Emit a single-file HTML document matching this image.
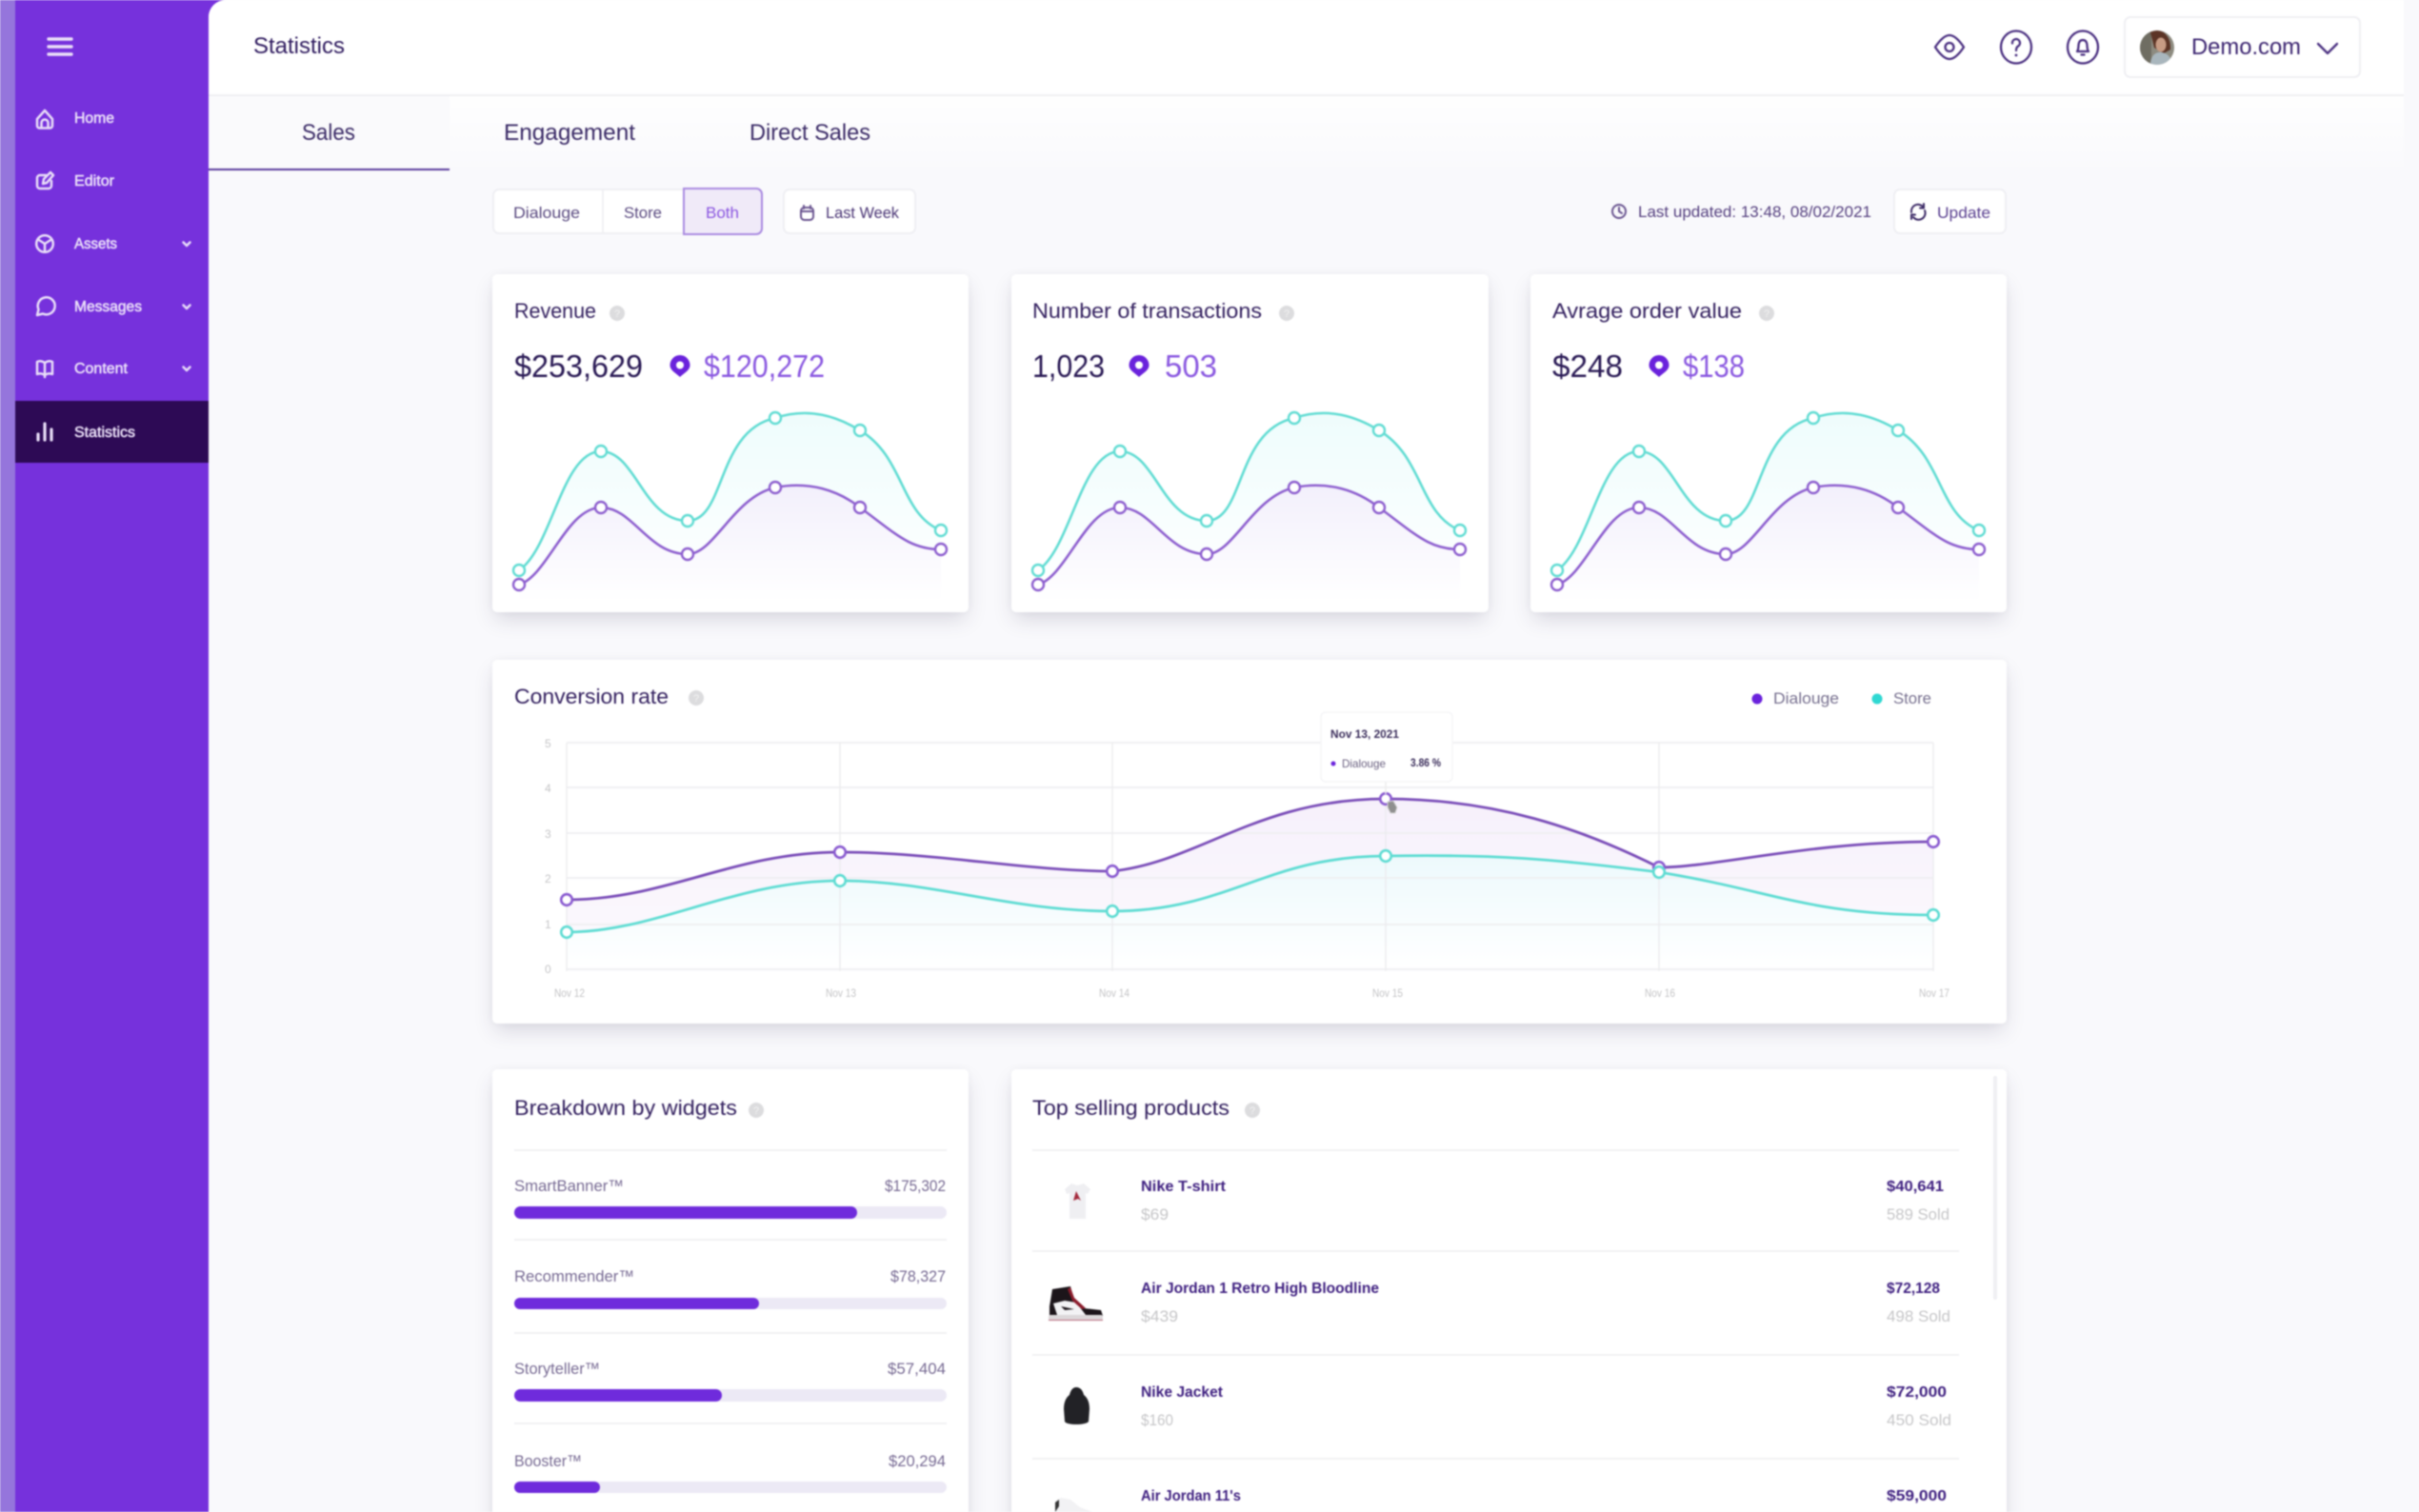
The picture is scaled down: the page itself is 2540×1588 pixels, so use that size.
<!DOCTYPE html>
<html lang="en">
<head>
<meta charset="utf-8">
<title>Statistics</title>
<style>
html,body{margin:0;padding:0;background:#f8f8fb;}
#root{position:relative;width:2540px;height:1588px;overflow:hidden;background:#f8f8fb;filter:blur(.8px);font-family:"Liberation Sans",sans-serif;}
.strip{position:absolute;left:0;top:0;width:16px;height:1588px;background:#9575dc;}
.side{position:absolute;left:16px;top:0;width:232px;height:1588px;background:#7631dc;}
.active{position:absolute;left:16px;top:421px;width:203px;height:65px;background:#2d0a55;}
.main{position:absolute;left:219px;top:0;width:2321px;height:1588px;background:#f9f9fc;border-top-left-radius:18px;overflow:hidden;}
.top{position:absolute;left:0;top:0;width:2305px;height:99px;background:#fff;border-bottom:2px solid #efeff2;}
.band{position:absolute;left:253px;top:101px;width:2052px;height:78px;background:linear-gradient(#fefefe,#f9f9fc);}
.salesbg{position:absolute;left:0;top:101px;width:253px;height:76px;background:#fafafc;}
.under{position:absolute;left:0;top:177px;width:253px;height:2px;background:#5a3a9c;}
.card{position:absolute;background:#fff;border-radius:5px;box-shadow:0 10px 22px -3px rgba(50,40,80,.17),0 0 8px rgba(50,40,80,.04);}
.btn{position:absolute;background:#fff;border:2px solid #efeff3;border-radius:7px;box-sizing:border-box;}
.both{position:absolute;background:#f0eaf8;border:2px solid #a98ae0;border-radius:0 7px 7px 0;box-sizing:border-box;}
svg{position:absolute;left:0;top:0;}
text{font-family:"Liberation Sans",sans-serif;}
</style>
</head>
<body>
<div id="root">
  <div class="strip"></div>
  <div class="side"></div>
  <div class="active"></div>
  <div class="main">
    <div class="top"></div>
    <div class="band"></div>
    <div class="salesbg"></div>
    <div class="under"></div>
  </div>
  <div class="btn" style="left:2230px;top:17px;width:249px;height:65px;"></div>
  <div class="btn" style="left:517px;top:198px;width:283px;height:48px;"></div>
  <div style="position:absolute;left:632px;top:200px;width:2px;height:44px;background:#f1f1f4;"></div>
  <div class="both" style="left:717px;top:197px;width:84px;height:50px;"></div>
  <div class="btn" style="left:822px;top:198px;width:140px;height:48px;"></div>
  <div class="btn" style="left:1988px;top:198px;width:119px;height:48px;"></div>

  <div class="card" style="left:517px;top:288px;width:500px;height:355px;"></div>
  <div class="card" style="left:1062px;top:288px;width:501px;height:355px;"></div>
  <div class="card" style="left:1607px;top:288px;width:500px;height:355px;"></div>
  <div class="card" style="left:517px;top:693px;width:1590px;height:382px;"></div>
  <div class="card" style="left:517px;top:1123px;width:500px;height:520px;"></div>
  <div class="card" style="left:1062px;top:1123px;width:1045px;height:520px;"></div>

  <svg width="2540" height="1588" viewBox="0 0 2540 1588" xmlns="http://www.w3.org/2000/svg">
    <defs>
      <linearGradient id="gt" gradientUnits="userSpaceOnUse" x1="0" y1="430" x2="0" y2="635">
        <stop offset="0" stop-color="#eefcfc"/><stop offset="1" stop-color="#ffffff"/>
      </linearGradient>
      <linearGradient id="gp" gradientUnits="userSpaceOnUse" x1="0" y1="505" x2="0" y2="635">
        <stop offset="0" stop-color="#f2effb"/><stop offset="1" stop-color="#ffffff"/>
      </linearGradient>
      <linearGradient id="cp" gradientUnits="userSpaceOnUse" x1="0" y1="840" x2="0" y2="1018">
        <stop offset="0" stop-color="#f6f0fb"/><stop offset="1" stop-color="#fcfafd"/>
      </linearGradient>
      <linearGradient id="ct" gradientUnits="userSpaceOnUse" x1="0" y1="900" x2="0" y2="1018">
        <stop offset="0" stop-color="#edf9fc"/><stop offset="1" stop-color="#ffffff"/>
      </linearGradient>
      <g id="spark">
        <path d="M545 599 C580 575 590 474 631 474 C668 474 675 547 722 547 C762 547 752 452 814 439 C850 427 880 438 903 452 C950 480 945 540 988 557 L988 632 L545 632 Z" fill="url(#gt)"/>
        <path d="M545 614 C575 605 595 533 631 533 C665 533 680 582 722 582 C750 582 770 522 814 512 C850 505 880 515 903 533 C940 560 955 577 988 577 L988 632 L545 632 Z" fill="url(#gp)"/>
        <path d="M545 599 C580 575 590 474 631 474 C668 474 675 547 722 547 C762 547 752 452 814 439 C850 427 880 438 903 452 C950 480 945 540 988 557" fill="none" stroke="#62dcd3" stroke-width="2.600"/>
        <path d="M545 614 C575 605 595 533 631 533 C665 533 680 582 722 582 C750 582 770 522 814 512 C850 505 880 515 903 533 C940 560 955 577 988 577" fill="none" stroke="#8e60cf" stroke-width="2.600"/>
        <g fill="#fff" stroke="#62dcd3" stroke-width="2.400">
          <circle cx="545" cy="599" r="6"/><circle cx="631" cy="474" r="6"/><circle cx="722" cy="547" r="6"/><circle cx="814" cy="439" r="6"/><circle cx="903" cy="452" r="6"/><circle cx="988" cy="557" r="6"/>
        </g>
        <g fill="#fff" stroke="#8e60cf" stroke-width="2.400">
          <circle cx="545" cy="614" r="6"/><circle cx="631" cy="533" r="6"/><circle cx="722" cy="582" r="6"/><circle cx="814" cy="512" r="6"/><circle cx="903" cy="533" r="6"/><circle cx="988" cy="577" r="6"/>
        </g>
      </g>
      <g id="pin">
        <path d="M0 -11 A10.500 10.500 0 0 1 10.500 -.5 C10.500 5 4 8 0 12 C-4 8 -10.500 5 -10.500 -.5 A10.500 10.500 0 0 1 0 -11 Z" fill="#6a22dc"/>
        <circle cx="0" cy="-.5" r="4" fill="#fff"/>
      </g>
      <g id="info">
        <circle r="8" fill="#dcdcde"/>
        <text x="0" y="4" text-anchor="middle" font-size="11" fill="#f2f2f2">?</text>
      </g>
    </defs>

    <!-- sidebar -->
    <g stroke="#eadff8" stroke-width="3.400" stroke-linecap="round">
      <path d="M51 41 H75 M51 49 H75 M51 57 H75"/>
    </g>
    <g fill="none" stroke="#e9def8" stroke-width="2.500" stroke-linecap="round" stroke-linejoin="round">
      <path d="M39 125 L47 116 L55 125 V132 A2.500 2.500 0 0 1 52.500 134.500 H41.500 A2.500 2.500 0 0 1 39 132 Z"/>
      <path d="M43.500 134 V129 A3.500 3.500 0 0 1 50.500 129 V134"/>
      <path d="M48 184 H42 A3 3 0 0 0 39 187 V195 A3 3 0 0 0 42 198 H51 A3 3 0 0 0 54 195 V190"/>
      <path d="M45 193 L46 188 L53 181 L56 184 L49 192 Z"/>
      <circle cx="47" cy="256" r="8.800"/>
      <path d="M47 256 L40 251.500 M47 256 L54 251.500 M47 256 V264"/>
      <path d="M39 331 L40.500 325 A9 9 0 1 1 45 329.500 Z"/>
      <path d="M47 381 C44 379 41 379 39 380 V393 C42 392 44 392 47 394 C50 392 52 392 55 393 V380 C53 379 50 379 47 381 V396"/>
      <path d="M192.500 254.500 L196 258 L199.500 254.500 M192.500 320.500 L196 324 L199.500 320.500 M192.500 385.500 L196 389 L199.500 385.500"/>
    </g>
    <g stroke="#e9def8" stroke-width="3.200" stroke-linecap="round">
      <path d="M40 456 V462 M47 445 V462 M54 451 V462"/>
    </g>
    <g fill="#ece2f9" font-size="16" stroke="#ece2f9" stroke-width=".5">
      <text x="78" y="129" textLength="42" lengthAdjust="spacingAndGlyphs">Home</text>
      <text x="78" y="195" textLength="42" lengthAdjust="spacingAndGlyphs">Editor</text>
      <text x="78" y="261" textLength="45" lengthAdjust="spacingAndGlyphs">Assets</text>
      <text x="78" y="327" textLength="71" lengthAdjust="spacingAndGlyphs">Messages</text>
      <text x="78" y="392" textLength="56" lengthAdjust="spacingAndGlyphs">Content</text>
      <text x="78" y="459" textLength="64" lengthAdjust="spacingAndGlyphs">Statistics</text>
    </g>

    <!-- top bar -->
    <g fill="#2e1a5e" font-size="24">
      <text x="266" y="56" textLength="96" lengthAdjust="spacingAndGlyphs">Statistics</text>
      <text x="317" y="147" textLength="56" lengthAdjust="spacingAndGlyphs" fill="#3a2a66">Sales</text>
      <text x="529" y="147" textLength="138" lengthAdjust="spacingAndGlyphs" fill="#3a2a66">Engagement</text>
      <text x="787" y="147" textLength="127" lengthAdjust="spacingAndGlyphs" fill="#3a2a66">Direct Sales</text>
      <text x="2301" y="57" textLength="115" lengthAdjust="spacingAndGlyphs" fill="#3b2470">Demo.com</text>
    </g>
    <g fill="none" stroke="#4a2f80" stroke-width="2.300" stroke-linecap="round" stroke-linejoin="round">
      <path d="M2032 49.500 C2037 42 2042 37 2047 37 C2052 37 2057 42 2062 49.500 C2057 57 2052 62 2047 62 C2042 62 2037 57 2032 49.500 Z"/>
      <circle cx="2047" cy="49.500" r="4.500"/>
      <ellipse cx="2117" cy="49.500" rx="16" ry="17"/>
      <path d="M2113 45.500 A4 4 0 1 1 2119 48.500 C2117.500 49.500 2117 50.500 2117 53"/>
      <ellipse cx="2187" cy="49.500" rx="16" ry="17"/>
      <path d="M2181 54 C2183 52 2182 47 2183 45 A4.200 4.200 0 0 1 2191 45 C2192 47 2191 52 2193 54 Z M2185.500 57.500 H2188.500"/>
      <path d="M2434 46 L2444 56 L2454 46"/>
    </g>
    <circle cx="2117" cy="58" r="1.400" fill="#4a2f80"/>
    <!-- avatar -->
    <clipPath id="av"><ellipse cx="2265" cy="50" rx="18" ry="18"/></clipPath>
    <g clip-path="url(#av)">
      <rect x="2247" y="32" width="36" height="36" fill="#8d8b80"/>
      <rect x="2247" y="32" width="12" height="36" fill="#6f6d62"/>
      <path d="M2258 34 C2268 28 2280 36 2279 52 L2272 56 L2262 50 Z" fill="#5c3426"/>
      <ellipse cx="2269" cy="47" rx="5.500" ry="7.500" fill="#c79b84"/>
      <path d="M2258 68 C2258 58 2264 54 2270 55 C2276 56 2280 60 2280 68 Z" fill="#a9b6bd"/>
    </g>

    <!-- filters -->
    <g font-size="17">
      <text x="539" y="229" textLength="70" lengthAdjust="spacingAndGlyphs" fill="#5a4a80">Dialouge</text>
      <text x="655" y="229" textLength="40" lengthAdjust="spacingAndGlyphs" fill="#5a4a80">Store</text>
      <text x="741" y="229" textLength="35" lengthAdjust="spacingAndGlyphs" fill="#8a55e0">Both</text>
      <text x="867" y="229" textLength="77" lengthAdjust="spacingAndGlyphs" fill="#4a3575">Last Week</text>
      <text x="1720" y="228" textLength="245" lengthAdjust="spacingAndGlyphs" fill="#55407f">Last updated: 13:48, 08/02/2021</text>
      <text x="2034" y="229" textLength="56" lengthAdjust="spacingAndGlyphs" fill="#5a4090">Update</text>
    </g>
    <g fill="none" stroke="#6a5590" stroke-width="2" stroke-linecap="round" stroke-linejoin="round">
      <rect x="841" y="218" width="13" height="13" rx="3.500"/>
      <path d="M841 222 H854 M844 216 V219 M851 216 V219"/>
      <circle cx="1700" cy="222" r="7"/>
      <path d="M1700 218 V222 L1703 224"/>
    </g>
    <g fill="none" stroke="#3c2a66" stroke-width="2" stroke-linecap="round" stroke-linejoin="round">
      <path d="M2007 223 A7 7 0 0 1 2019 217 M2021 221 A7 7 0 0 1 2009 228"/>
      <path d="M2020 214 V218.500 H2016 M2007 230 V225.500 H2011"/>
    </g>

    <!-- stat cards -->
    <use href="#spark"/>
    <use href="#spark" transform="translate(545 0)"/>
    <use href="#spark" transform="translate(1090 0)"/>

    <g fill="#33205f" font-size="22">
      <text x="540" y="334" textLength="86" lengthAdjust="spacingAndGlyphs">Revenue</text>
      <text x="1084" y="334" textLength="241" lengthAdjust="spacingAndGlyphs">Number of transactions</text>
      <text x="1630" y="334" textLength="199" lengthAdjust="spacingAndGlyphs">Avrage order value</text>
      <text x="540" y="739" textLength="162" lengthAdjust="spacingAndGlyphs">Conversion rate</text>
      <text x="540" y="1171" textLength="234" lengthAdjust="spacingAndGlyphs">Breakdown by widgets</text>
      <text x="1084" y="1171" textLength="207" lengthAdjust="spacingAndGlyphs">Top selling products</text>
    </g>
    <use href="#info" transform="translate(648 329)"/>
    <use href="#info" transform="translate(1351 329)"/>
    <use href="#info" transform="translate(1855 329)"/>
    <use href="#info" transform="translate(731 733)"/>
    <use href="#info" transform="translate(794 1166)"/>
    <use href="#info" transform="translate(1315 1166)"/>

    <g font-size="33" fill="#2a1a55">
      <text x="540" y="396" textLength="135" lengthAdjust="spacingAndGlyphs">$253,629</text>
      <text x="1084" y="396" textLength="76" lengthAdjust="spacingAndGlyphs">1,023</text>
      <text x="1630" y="396" textLength="74" lengthAdjust="spacingAndGlyphs">$248</text>
    </g>
    <g font-size="33" fill="#8a58e0">
      <text x="739" y="396" textLength="127" lengthAdjust="spacingAndGlyphs">$120,272</text>
      <text x="1223" y="396" textLength="55" lengthAdjust="spacingAndGlyphs">503</text>
      <text x="1767" y="396" textLength="65" lengthAdjust="spacingAndGlyphs">$138</text>
    </g>
    <use href="#pin" transform="translate(714 384)"/>
    <use href="#pin" transform="translate(1196 384)"/>
    <use href="#pin" transform="translate(1742 384)"/>

    <!-- conversion chart -->
    <path d="M595 945 C700 945 770 895 882 895 C980 895 1080 915 1168 915 C1260 905 1320 839 1455 839 C1570 839 1660 870 1742 911 C1800 911 1900 884 2030 884 L2030 1018 L595 1018 Z" fill="url(#cp)"/>
    <path d="M595 979 C690 979 770 925 882 925 C980 925 1060 957 1168 957 C1290 957 1330 899 1455 899 C1570 897 1630 902 1742 916 C1860 935 1900 961 2030 961 L2030 1018 L595 1018 Z" fill="url(#ct)"/>
    <g stroke="#efeff1" stroke-width="2" opacity=".9">
      <path d="M595 780 H2030 M595 827 H2030 M595 875 H2030 M595 922 H2030 M595 971 H2030 M595 1018 H2030"/>
    </g>
    <g stroke="#ebebee" stroke-width="1.300">
      <path d="M595 780 V1020 M882 780 V1020 M1168 780 V1020 M1455 821 V1020 M1742 780 V1020 M2030 780 V1020"/>
    </g>
    <g font-size="12" fill="#c4c4c6">
      <text x="572" y="785">5</text><text x="572" y="832">4</text><text x="572" y="880">3</text><text x="572" y="927">2</text><text x="572" y="975">1</text><text x="572" y="1022">0</text>
      <text x="598" y="1047" text-anchor="middle" textLength="32" lengthAdjust="spacingAndGlyphs">Nov 12</text>
      <text x="883" y="1047" text-anchor="middle" textLength="32" lengthAdjust="spacingAndGlyphs">Nov 13</text>
      <text x="1170" y="1047" text-anchor="middle" textLength="32" lengthAdjust="spacingAndGlyphs">Nov 14</text>
      <text x="1457" y="1047" text-anchor="middle" textLength="32" lengthAdjust="spacingAndGlyphs">Nov 15</text>
      <text x="1743" y="1047" text-anchor="middle" textLength="32" lengthAdjust="spacingAndGlyphs">Nov 16</text>
      <text x="2031" y="1047" text-anchor="middle" textLength="32" lengthAdjust="spacingAndGlyphs">Nov 17</text>
    </g>
    <path d="M595 979 C690 979 770 925 882 925 C980 925 1060 957 1168 957 C1290 957 1330 899 1455 899 C1570 897 1630 902 1742 916 C1860 935 1900 961 2030 961" fill="none" stroke="#5fdcd3" stroke-width="2.800"/>
    <path d="M595 945 C700 945 770 895 882 895 C980 895 1080 915 1168 915 C1260 905 1320 839 1455 839 C1570 839 1660 870 1742 911 C1800 911 1900 884 2030 884" fill="none" stroke="#7a4db8" stroke-width="2.800"/>
    <g fill="#fff" stroke="#8a5bd0" stroke-width="2.600">
      <circle cx="595" cy="945" r="5.800"/><circle cx="882" cy="895" r="5.800"/><circle cx="1168" cy="915" r="5.800"/><circle cx="1455" cy="839" r="5.800"/><circle cx="1742" cy="911" r="5.800"/><circle cx="2030" cy="884" r="5.800"/>
    </g>
    <g fill="#fff" stroke="#5fdcd3" stroke-width="2.600">
      <circle cx="595" cy="979" r="5.800"/><circle cx="882" cy="925" r="5.800"/><circle cx="1168" cy="957" r="5.800"/><circle cx="1455" cy="899" r="5.800"/><circle cx="1742" cy="916" r="5.800"/><circle cx="2030" cy="961" r="5.800"/>
    </g>
    <!-- cursor -->
    <path d="M1457 842 L1463 841 L1467 848 L1465 854 L1460 854 L1457 848 Z" fill="#8f8f8f" stroke="#d8d8d8" stroke-width="1"/>
    <!-- tooltip -->
    <rect x="1387" y="748" width="138" height="73" rx="5" fill="#fff" stroke="#f5f5f7" stroke-width="1.500"/>
    <path d="M1455 821 V834" stroke="#eee" stroke-width="1.500"/>
    <text x="1397" y="775" font-size="12" font-weight="bold" fill="#3c2f5c" textLength="72" lengthAdjust="spacingAndGlyphs">Nov 13, 2021</text>
    <circle cx="1400" cy="802" r="2.500" fill="#6a22dc"/>
    <text x="1409" y="806" font-size="12" fill="#6a6080" textLength="46" lengthAdjust="spacingAndGlyphs">Dialouge</text>
    <text x="1481" y="805" font-size="12" font-weight="bold" fill="#3c2f5c" textLength="32" lengthAdjust="spacingAndGlyphs">3.86 %</text>
    <!-- legend -->
    <circle cx="1845" cy="734" r="5.500" fill="#6a22dc"/>
    <text x="1862" y="739" font-size="17" fill="#77708f" textLength="69" lengthAdjust="spacingAndGlyphs">Dialouge</text>
    <circle cx="1971" cy="734" r="5.500" fill="#2fd8d2"/>
    <text x="1988" y="739" font-size="17" fill="#77708f" textLength="40" lengthAdjust="spacingAndGlyphs">Store</text>

    <!-- breakdown -->
    <g stroke="#f1f1f3" stroke-width="2">
      <path d="M540 1208 H994 M540 1302 H994 M540 1400 H994 M540 1495 H994"/>
      <path d="M1084 1208 H2057 M1084 1314 H2057 M1084 1423 H2057 M1084 1532 H2057"/>
    </g>
    <g fill="#776a93" font-size="17">
      <text x="540" y="1251" textLength="115" lengthAdjust="spacingAndGlyphs">SmartBanner™</text>
      <text x="929" y="1251" textLength="64" lengthAdjust="spacingAndGlyphs">$175,302</text>
      <text x="540" y="1346" textLength="126" lengthAdjust="spacingAndGlyphs">Recommender™</text>
      <text x="935" y="1346" textLength="58" lengthAdjust="spacingAndGlyphs">$78,327</text>
      <text x="540" y="1443" textLength="90" lengthAdjust="spacingAndGlyphs">Storyteller™</text>
      <text x="932" y="1443" textLength="61" lengthAdjust="spacingAndGlyphs">$57,404</text>
      <text x="540" y="1540" textLength="71" lengthAdjust="spacingAndGlyphs">Booster™</text>
      <text x="933" y="1540" textLength="60" lengthAdjust="spacingAndGlyphs">$20,294</text>
    </g>
    <g fill="#ece9f5">
      <rect x="540" y="1267" width="454" height="13" rx="6.500"/>
      <rect x="540" y="1363" width="454" height="12" rx="6"/>
      <rect x="540" y="1459" width="454" height="13" rx="6.500"/>
      <rect x="540" y="1556" width="454" height="12" rx="6"/>
    </g>
    <g fill="#6f2bdc">
      <rect x="540" y="1267" width="360" height="13" rx="6.500"/>
      <rect x="540" y="1363" width="257" height="12" rx="6"/>
      <rect x="540" y="1459" width="218" height="13" rx="6.500"/>
      <rect x="540" y="1556" width="90" height="12" rx="6"/>
    </g>

    <!-- products -->
    <rect x="2093" y="1130" width="4" height="235" rx="2" fill="#efeff3"/>
    <g fill="#3f2080" font-size="16" font-weight="bold">
      <text x="1198" y="1251" textLength="89" lengthAdjust="spacingAndGlyphs">Nike T-shirt</text>
      <text x="1198" y="1358" textLength="250" lengthAdjust="spacingAndGlyphs">Air Jordan 1 Retro High Bloodline</text>
      <text x="1198" y="1467" textLength="86" lengthAdjust="spacingAndGlyphs">Nike Jacket</text>
      <text x="1198" y="1576" textLength="105" lengthAdjust="spacingAndGlyphs">Air Jordan 11's</text>
      <text x="1981" y="1251" textLength="60" lengthAdjust="spacingAndGlyphs">$40,641</text>
      <text x="1981" y="1358" textLength="56" lengthAdjust="spacingAndGlyphs">$72,128</text>
      <text x="1981" y="1467" textLength="63" lengthAdjust="spacingAndGlyphs">$72,000</text>
      <text x="1981" y="1576" textLength="63" lengthAdjust="spacingAndGlyphs">$59,000</text>
    </g>
    <g fill="#c6c6c8" font-size="17">
      <text x="1198" y="1281" textLength="29" lengthAdjust="spacingAndGlyphs">$69</text>
      <text x="1198" y="1388" textLength="39" lengthAdjust="spacingAndGlyphs">$439</text>
      <text x="1198" y="1497" textLength="34" lengthAdjust="spacingAndGlyphs">$160</text>
      <text x="1981" y="1281" textLength="66" lengthAdjust="spacingAndGlyphs">589 Sold</text>
      <text x="1981" y="1388" textLength="67" lengthAdjust="spacingAndGlyphs">498 Sold</text>
      <text x="1981" y="1497" textLength="68" lengthAdjust="spacingAndGlyphs">450 Sold</text>
    </g>
    <!-- t-shirt -->
    <path d="M1125 1243 L1131 1245 L1138 1243 L1145 1249 L1142 1254 L1140 1253 L1140 1280 L1123 1280 L1123 1253 L1120 1254 L1118 1249 Z" fill="#efeff2"/>
    <path d="M1130 1251 L1135 1261 L1132 1259 L1127 1261 Z" fill="#a42a3c"/>
    <!-- shoe -->
    <path d="M1105 1354 L1124 1351 L1128 1366 L1138 1374 L1156 1376 L1158 1382 L1102 1382 L1102 1372 Z" fill="#1c151a"/>
    <path d="M1106 1369 L1118 1366 L1130 1368 L1140 1381 L1110 1381 Z" fill="#f2f2f4"/>
    <path d="M1124 1352 L1128 1363 L1140 1374 L1136 1375 L1126 1366 L1121 1354 Z" fill="#8c1c2c"/>
    <path d="M1114 1372 L1128 1375 L1118 1376 Z" fill="#1c151a"/>
    <rect x="1101" y="1381" width="57" height="6" rx="2" fill="#dcd8da"/>
    <path d="M1101 1386.500 H1158" stroke="#b7677a" stroke-width="1"/>
    <!-- jacket -->
    <path d="M1130 1457 C1135 1457 1137 1461 1138 1465 C1142 1468 1144 1473 1144 1480 L1143 1493 C1140 1497 1120 1497 1118 1493 L1117 1480 C1117 1473 1119 1468 1123 1465 C1124 1461 1126 1457 1130 1457 Z" fill="#222226"/>
    <!-- shoe 4 -->
    <path d="M1108 1588 L1108 1576 L1114 1573 L1124 1575 L1134 1583 L1147 1588 Z" fill="#f2f2f4"/>
    <path d="M1108 1588 L1108 1578 L1112 1575 L1112 1582 Z" fill="#333"/>
  </svg>
</div>
</body>
</html>
